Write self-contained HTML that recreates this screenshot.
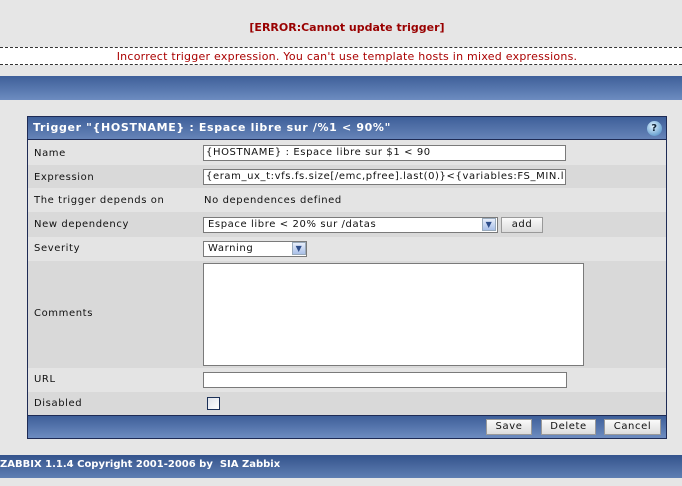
<!DOCTYPE html>
<html><head><meta charset="utf-8"><style>
*{margin:0;padding:0;box-sizing:border-box}
body{width:682px;height:486px;background:#e6e6e6;font-family:"DejaVu Sans","Liberation Sans",sans-serif;font-size:10px;color:#111;position:relative;overflow:hidden}
.a{position:absolute;white-space:nowrap}
.err{left:0;width:694px;top:21px;text-align:center;color:#990000;font-weight:bold;font-size:11px}
.band{left:0;width:682px;top:47px;height:18px;background:#fff;border-top:1px dashed #333;border-bottom:1px dashed #333}
.msg{left:0;width:694px;top:50px;text-align:center;color:#a00;font-size:11px;letter-spacing:0.25px}
.blue{background:linear-gradient(#3e5f99,#6d8cc0)}
.bar1{left:0;top:76px;width:682px;height:24px}
.tbl{left:27px;top:116px;width:640px;height:323px;border:1px solid #1e2b55;background:#e4e4e4}
.tbl div{letter-spacing:0.6px}
.hdr{left:0;top:0;width:638px;height:23px;border-bottom:1px solid #1e2b55;color:#fff;font-weight:bold;font-size:11px;padding:4px 0 0 5px;background:linear-gradient(#3e5f99,#6684b8)}
.tbl .hdr{letter-spacing:0.65px}
.row{left:0;width:638px}
.lbl{left:6px}
.inp{background:#fff;border:1px solid #7a7a7a;font-size:10px;padding:1px 2px;overflow:hidden}
.btn{background:linear-gradient(#fafafa,#dcdcdc);border:1px solid #999;font-size:10px;text-align:center;padding-top:1px;color:#111}
.dd{background:linear-gradient(#e8eefa,#a9c0e8);border:1px solid #9ab;width:14px;height:13px;color:#2d4d8a;font-size:8px;text-align:center;line-height:12px}
.help{left:619px;top:4px;width:15px;height:15px;border-radius:50%;background:radial-gradient(circle at 40% 35%,#e0f2ff,#3d84bf);color:#123;font-weight:bold;font-size:10px;text-align:center;line-height:15px}
.foot{left:0;top:298px;width:638px;height:23px;border-top:1px solid #1e2b55}
.bar2{left:0;top:455px;width:682px;height:23px;background:linear-gradient(#34538c,#5f7fb3);color:#fff;font-weight:bold;font-size:10px;padding:4px 0 0 0}
</style></head><body>
<div class="a err">[ERROR:Cannot update trigger]</div>
<div class="a band"></div>
<div class="a msg">Incorrect trigger expression. You can't use template hosts in mixed expressions.</div>
<div class="a bar1 blue"></div>

<div class="a tbl">
 <div class="a hdr">Trigger "{HOSTNAME} : Espace libre sur /%1 &lt; 90%"</div>
 <div class="a help">?</div>
 <div class="a row" style="top:24px;height:24px;background:#e4e4e4"></div>
 <div class="a row" style="top:48px;height:23px;background:#d9d9d9"></div>
 <div class="a row" style="top:71px;height:24px;background:#e4e4e4"></div>
 <div class="a row" style="top:95px;height:25px;background:#d9d9d9"></div>
 <div class="a row" style="top:120px;height:24px;background:#e4e4e4"></div>
 <div class="a row" style="top:144px;height:107px;background:#d9d9d9"></div>
 <div class="a row" style="top:251px;height:24px;background:#e4e4e4"></div>
 <div class="a row" style="top:275px;height:23px;background:#d9d9d9"></div>

 <div class="a lbl" style="top:31px">Name</div>
 <div class="a lbl" style="top:55px">Expression</div>
 <div class="a lbl" style="top:78px">The trigger depends on</div>
 <div class="a lbl" style="top:102px">New dependency</div>
 <div class="a lbl" style="top:126px">Severity</div>
 <div class="a lbl" style="top:191px">Comments</div>
 <div class="a lbl" style="top:257px">URL</div>
 <div class="a lbl" style="top:281px">Disabled</div>

 <div class="a inp" style="left:175px;top:28px;width:363px;height:16px">{HOSTNAME} : Espace libre sur $1 &lt; 90</div>
 <div class="a inp" style="left:175px;top:52px;width:363px;height:16px">{eram_ux_t:vfs.fs.size[/emc,pfree].last(0)}&lt;{variables:FS_MIN.l</div>
 <div class="a" style="left:176px;top:78px">No dependences defined</div>
 <div class="a inp" style="left:175px;top:100px;width:295px;height:16px;padding-left:4px">Espace libre &lt; 20% sur /datas</div>
 <div class="a dd" style="left:454px;top:101px">&#9660;</div>
 <div class="a btn" style="left:473px;top:100px;width:42px;height:16px">add</div>
 <div class="a inp" style="left:175px;top:124px;width:104px;height:16px;padding-left:4px">Warning</div>
 <div class="a dd" style="left:264px;top:125px">&#9660;</div>
 <div class="a inp" style="left:175px;top:146px;width:381px;height:103px"></div>
 <div class="a inp" style="left:175px;top:255px;width:364px;height:16px"></div>
 <div class="a" style="left:179px;top:280px;width:13px;height:13px;border:1px solid #1c3158;background:linear-gradient(135deg,#dfe3ea,#fff)"></div>

 <div class="a foot blue"></div>
 <div class="a btn" style="left:458px;top:302px;width:46px;height:16px">Save</div>
 <div class="a btn" style="left:513px;top:302px;width:55px;height:16px">Delete</div>
 <div class="a btn" style="left:576px;top:302px;width:57px;height:16px">Cancel</div>
</div>

<div class="a bar2">ZABBIX 1.1.4 Copyright 2001-2006 by&nbsp; SIA Zabbix</div>
</body></html>
